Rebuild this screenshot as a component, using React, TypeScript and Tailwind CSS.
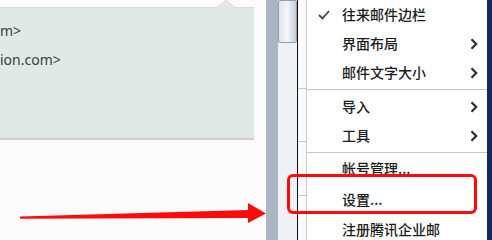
import React from 'react';

const cjk = { fontFamily: '"Noto Sans CJK SC", "Noto Sans", sans-serif' };

type Item = { label: string; check?: boolean; sub?: boolean; h: string } | 'sep';

const items: Item[] = [
  { label: '往来邮件边栏', check: true, h: 'h-[29px]' },
  { label: '界面布局', sub: true, h: 'h-[29px]' },
  { label: '邮件文字大小', sub: true, h: 'h-[29px]' },
  'sep',
  { label: '导入', sub: true, h: 'h-[29px]' },
  { label: '工具', sub: true, h: 'h-[29px]' },
  'sep',
  { label: '帐号管理...', h: 'h-[29px] pb-[3px]' },
  { label: '设置...', h: 'h-[30px]' },
  { label: '注册腾讯企业邮', h: 'h-[30px]' },
];

function Chevron() {
  return (
    <svg width="8" height="12" viewBox="0 0 8 12" className="text-[#2e2e2e]">
      <path d="M1.5 1.2 L6.2 6 L1.5 10.8" fill="none" stroke="currentColor" strokeWidth="2.2" />
    </svg>
  );
}

function Check() {
  return (
    <svg width="12" height="10" viewBox="0 0 12 10" className="text-[#444]">
      <path d="M1 5 L4.5 8.5 L11 1" fill="none" stroke="currentColor" strokeWidth="1.8" />
    </svg>
  );
}

export default function App() {
  return (
    <div className="relative flex w-[492px] h-[240px] overflow-hidden bg-[#fcfcfc]">
      {/* Mail reading pane */}
      <div className="w-[266px] shrink-0 pt-[7px]">
        <div className="relative w-[254px] h-[133px] bg-[#e0e9e6] border-t border-[#d4dcda] border-b-2 border-b-[#cdd1d1]">
          <div
            className="pt-[8px] text-[14px] leading-[29px] text-[#3c3c3c] whitespace-nowrap"
            style={{ fontFamily: '"Noto Sans", sans-serif' }}
          >
            <div>m&gt;</div>
            <div>ion.com&gt;</div>
          </div>
          {/* notch */}
          <svg className="absolute left-[216px] -top-[8px]" width="20" height="9" viewBox="0 0 20 9">
            <path d="M0 8.5 L10 0.5 L20 8.5" fill="#e0e9e6" stroke="#d0d8d6" strokeWidth="1" />
          </svg>
        </div>
      </div>

      {/* Scrollbar */}
      <div className="w-[12px] shrink-0 bg-[#a9b6c2]" />
      <div className="w-[19px] shrink-0 flex flex-col bg-[#eef2f5]">
        <div className="h-[43px] bg-gradient-to-r from-[#dfe5ea] via-[#f4f6f8] to-[#c5ced7] border border-[#8e9fb0] rounded-[2px]" />
      </div>
      <div className="w-px shrink-0 bg-[#111]" />

      {/* Strip behind menu */}
      <div className="w-[8px] shrink-0 flex flex-col bg-[#fbfbfb]">
        <div className="h-[89px] border-b border-[#c6c6c6]" />
        <div className="h-[53px] border-b border-[#c6c6c6]" />
        <div className="h-[54px] border-b border-[#c6c6c6]" />
      </div>
      <div className="w-px shrink-0 bg-[#c9cdd0]" />

      {/* Context menu */}
      <div className="w-[180px] shrink-0 bg-white flex flex-col text-[14px] font-medium text-[#1b1b1b]" style={cjk}>
        {items.map((it, i) =>
          it === 'sep' ? (
            <div key={i} className="h-[5px] pt-[2px] shrink-0">
              <div className="h-px bg-[#c4c4c4]" />
            </div>
          ) : (
            <div key={i} className={`${it.h} flex items-center shrink-0`}>
              <div className="w-[35px] pl-[11px] flex items-center">{it.check && <Check />}</div>
              <span className="flex-1 whitespace-nowrap">{it.label}</span>
              <div className="w-[17px] flex items-center">{it.sub && <Chevron />}</div>
            </div>
          )
        )}
      </div>
      <div className="flex-1 bg-[#0f2a57]" />

      {/* Annotations */}
      <div className="absolute left-[287px] top-[174px] w-[190px] h-[40px] border-[3px] border-[#ff0a0a] rounded-[6px]" />
      <svg className="absolute left-0 top-[200px]" width="270" height="28" viewBox="0 200 270 28">
        <polygon
          points="20,216.5 248,210 248,203 266,213.5 248,223 248,218 20,218.8"
          fill="#ff0a0a"
        />
      </svg>
    </div>
  );
}
